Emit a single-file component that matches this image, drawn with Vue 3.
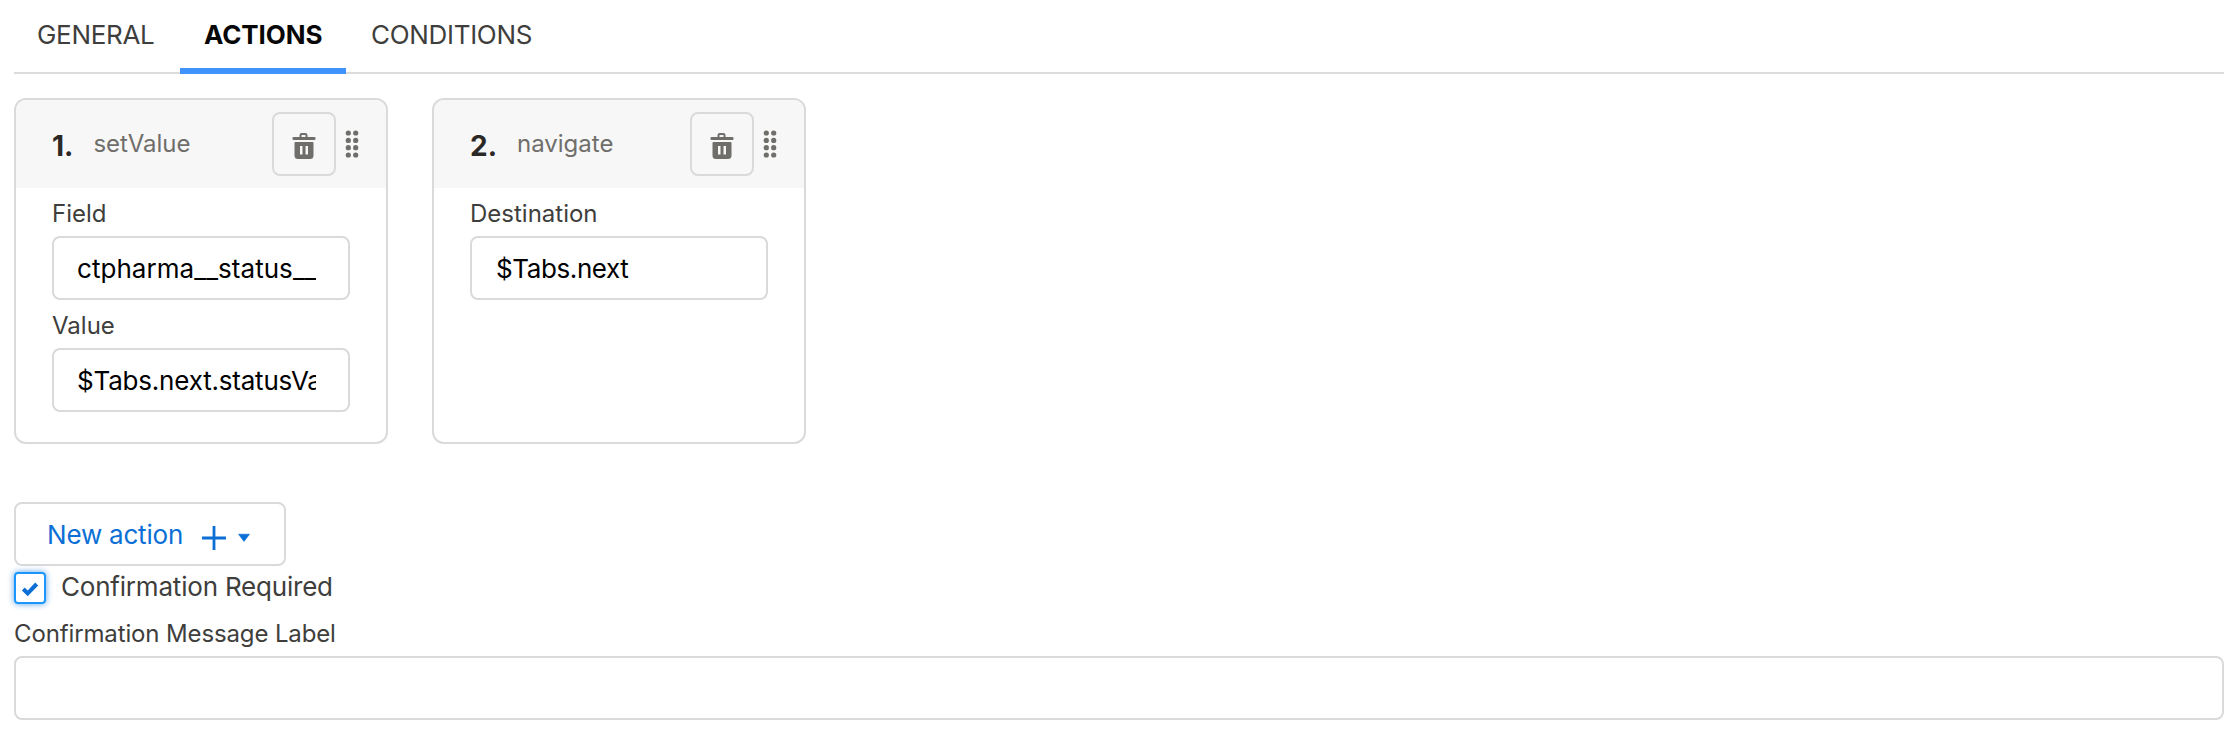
<script setup>
import { ref } from 'vue'

const tabs = ['General', 'Actions', 'Conditions']
const activeTab = ref('Actions')
const actions = ref([
  {
    type: 'setValue',
    fields: [
      { label: 'Field', value: 'ctpharma__status__' },
      { label: 'Value', value: '$Tabs.next.statusValue' },
    ],
  },
  { type: 'navigate', fields: [{ label: 'Destination', value: '$Tabs.next' }] },
])
const confirmation = ref(true)
const message = ref('')
const dotRows = [3, 10.4, 17.7, 25]
</script>

<template>
  <main class="panel">
    <nav class="tabs">
      <a
        v-for="tab in tabs"
        :key="tab"
        class="tab"
        :class="[tab.toLowerCase(), { active: tab === activeTab }]"
        @click="activeTab = tab"
      ><span>{{ tab.toUpperCase() }}</span></a>
    </nav>

    <section class="cards">
      <article v-for="(action, i) in actions" :key="i" class="card">
        <header class="card-head">
          <span class="num">{{ i + 1 }}.</span>
          <span class="type">{{ action.type }}</span>
          <button class="trash">
            <svg width="24" height="28" viewBox="0 0 24 28">
              <path d="M8.5 5V3.2Q8.5 2 9.7 2h3.6q1.2 0 1.2 1.2V5" fill="none" stroke="#706e6b" stroke-width="2" />
              <rect x="0.5" y="5" width="23" height="3" rx="1" fill="#706e6b" />
              <path fill-rule="evenodd" d="M3.5 10h17q1 0 1 1v12.500q0 3.500-3.500 3.500H6q-3.500 0-3.500-3.500V11q0-1 1-1zM8 14v8.500h2.500V14zM13.500 14v8.500H16V14z" fill="#706e6b" />
            </svg>
          </button>
          <svg class="grip" width="14" height="28" viewBox="0 0 14 28" fill="#706e6b">
            <template v-for="y in dotRows" :key="y">
              <circle cx="3.300" :cy="y" r="2.600" />
              <circle cx="10.700" :cy="y" r="2.600" />
            </template>
          </svg>
        </header>
        <div class="card-body">
          <label v-for="field in action.fields" :key="field.label" class="field">
            <span class="label">{{ field.label }}</span>
            <input v-model="field.value" class="input" :class="`input-${field.label.toLowerCase()}`" type="text" />
          </label>
        </div>
      </article>
    </section>

    <button class="new-action">
      <span>New action</span>
      <svg width="48" height="24" viewBox="0 0 48 24">
        <path d="M12 0v24M0 12h24" stroke="#0b6fd6" stroke-width="2.800" />
        <path d="M36.500 8.200h11l-5.500 7.300z" fill="#0b6fd6" stroke="#0b6fd6" stroke-width="0.600" stroke-linejoin="round" />
      </svg>
    </button>

    <div class="check-row" @click="confirmation = !confirmation">
      <span class="box">
        <svg v-if="confirmation" width="18" height="16" viewBox="0 0 18 16">
          <path d="M2.300 8l4.400 4.400L15.700 3" fill="none" stroke="#0b6fd6" stroke-width="4" />
        </svg>
      </span>
      <span class="check-label">Confirmation Required</span>
    </div>

    <label class="message">
      <span class="label message-label">Confirmation Message Label</span>
      <input v-model="message" class="input" type="text" />
    </label>
  </main>
</template>

<style>
body {
  background: #fff;
}
</style>

<style scoped>
.panel,
.panel * {
  box-sizing: border-box;
}
.panel {
  height: 738px;
  padding: 0 10px 0 14px;
  overflow: hidden;
  font-family: Inter, "Liberation Sans", sans-serif;
  font-size: 26px;
  color: #3e3e3c;
}
.tabs {
  display: flex;
  height: 74px;
  border-bottom: 2px solid #dbdbdb;
}
.tab {
  display: flex;
  height: 74px;
  padding: 18px 0 0 24px;
  line-height: 34px;
  letter-spacing: -0.3px;
  white-space: nowrap;
  cursor: pointer;
}
.general {
  width: 166px;
  padding-left: 23px;
}
.actions {
  width: 166px;
}
.conditions {
  padding-left: 25px;
}
.active {
  border-bottom: 6px solid #4093fb;
  font-weight: 700;
  letter-spacing: -0.1px;
  color: #080707;
}
.cards {
  display: flex;
  gap: 44px;
  margin-top: 24px;
}
.card {
  width: 374px;
  height: 346px;
  border: 2px solid #dadada;
  border-radius: 12px;
}
.card-head {
  display: flex;
  align-items: center;
  height: 88px;
  padding: 0 27px 0 36px;
  border-radius: 10px 10px 0 0;
  background: #f7f7f7;
}
.num {
  margin-top: 4px;
  font-size: 28px;
  font-weight: 700;
  color: #2b2826;
}
.type {
  margin: -2px auto 0 20px;
  font-size: 24px;
  color: #706e6b;
}
.trash {
  display: flex;
  align-items: center;
  justify-content: center;
  width: 64px;
  height: 64px;
  padding: 4px 0 0;
  border: 2px solid #dadada;
  border-radius: 8px;
  background: transparent;
}
.grip {
  margin-left: 9px;
}
.card-body {
  padding: 8px 36px 0;
}
.field {
  display: block;
  margin-bottom: 8px;
}
.label {
  display: block;
  height: 40px;
  line-height: 36px;
  font-size: 24px;
}
.message-label {
  letter-spacing: -0.13px;
}
.input {
  display: block;
  width: 100%;
  height: 64px;
  padding: 0 32px 0 23px;
  border: 2px solid #dadada;
  border-radius: 8px;
  outline: none;
  background: #fff;
  font: inherit;
  letter-spacing: -0.2px;
  color: #000;
}
.input-field {
  letter-spacing: 0.05px;
}
.input-destination {
  padding-left: 24px;
  letter-spacing: -0.4px;
}
.new-action {
  display: flex;
  align-items: center;
  justify-content: space-between;
  width: 272px;
  height: 64px;
  margin-top: 58px;
  padding: 0 34px 0 31px;
  border: 2px solid #dadada;
  border-radius: 8px;
  background: #fff;
  font: inherit;
  letter-spacing: -0.2px;
  color: #0b6fd6;
}
.new-action svg {
  margin-top: 8px;
}
.check-row {
  display: flex;
  height: 32px;
  margin-top: 6px;
}
.box {
  display: flex;
  align-items: center;
  justify-content: center;
  width: 32px;
  height: 32px;
  padding-top: 2px;
  border: 2px solid #1b96ff;
  border-radius: 4px;
  box-shadow: 0 0 6px #0b6fd6aa;
}
.check-label {
  margin-left: 15px;
  line-height: 30px;
  letter-spacing: -0.2px;
}
.message {
  display: block;
  margin-top: 12px;
}
</style>
